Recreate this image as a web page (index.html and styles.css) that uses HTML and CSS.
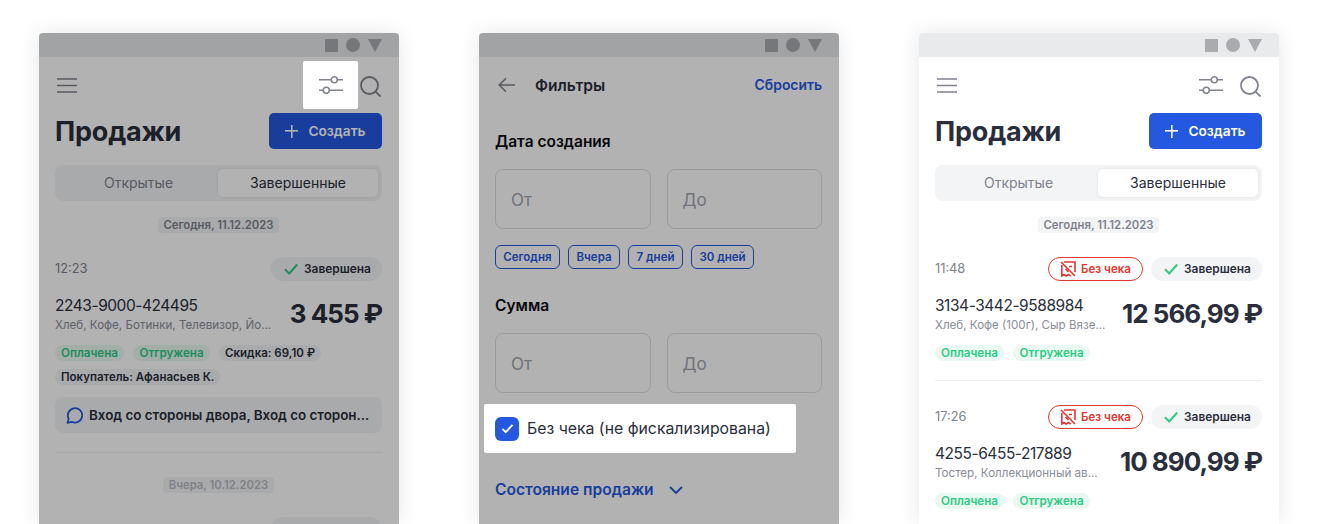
FILE: index.html
```html
<!DOCTYPE html>
<html lang="ru">
<head>
<meta charset="utf-8">
<title>Продажи</title>
<link rel="stylesheet" href="styles.css">
</head>
<body>
<svg class="defs" width="0" height="0" aria-hidden="true">
  <symbol id="i-menu" viewBox="0 0 20 15"><path d="M0 1h20M0 7.500h20M0 14h20" fill="none" stroke="currentColor" stroke-width="1.700"/></symbol>
  <symbol id="i-filter" viewBox="0 0 24 18"><g fill="none" stroke="currentColor" stroke-width="1.500"><path d="M0 3.800h12.300M18.300 3.800h5.700M0 14.200h4.300M10.300 14.200h13.700"/><circle cx="15.300" cy="3.800" r="3"/><circle cx="7.300" cy="14.200" r="3"/></g></symbol>
  <symbol id="i-search" viewBox="0 0 21 21"><g fill="none" stroke="currentColor" stroke-width="1.800"><circle cx="9.500" cy="9.500" r="8.500"/><path d="M15.800 15.800l4.700 4.700"/></g></symbol>
  <symbol id="i-check" viewBox="0 0 14 12"><path d="M1 6.300l4.200 4.200L13.200 1.500" fill="none" stroke="currentColor" stroke-width="2"/></symbol>
  <symbol id="i-nocheck" viewBox="0 0 16 16"><g fill="none" stroke="currentColor" stroke-width="1.600"><path d="M1 1l14 14M4 1h11v10M1.800 4v11l2.200-1.500 2.200 1.500 2.200-1.500 2.200 1.500M9 5.500h3M5.500 8l3 3"/></g></symbol>
  <symbol id="i-chat" viewBox="0 0 17 17"><path d="M1.500 15.800l1.200-4A7.200 7.200 0 1 1 5.800 14.800z" fill="none" stroke="currentColor" stroke-width="1.800" stroke-linejoin="round"/></symbol>
</svg>

<main class="board">
  <!-- 1 -->
  <section class="phone">
    <div class="statusbar"><i class="st st-sq"></i><i class="st st-ci"></i><i class="st st-tr"></i></div>
    <div class="screen">
      <header class="topbar">
        <svg class="ic-menu"><use href="#i-menu"/></svg>
        <span class="topicons"><span class="filterbox lifted"><svg class="ic-filter"><use href="#i-filter"/></svg></span><svg class="ic-search"><use href="#i-search"/></svg></span>
      </header>
      <div class="titlerow">
        <h1>Продажи</h1>
        <button class="create"><span class="plus"></span>Создать</button>
      </div>
      <div class="segment"><span>Открытые</span><span class="on">Завершенные</span></div>
      <div class="dateline"><span>Сегодня, 11.12.2023</span></div>
      <article class="order">
        <div class="orow"><time>12:23</time><span class="flags"><span class="done"><svg><use href="#i-check"/></svg>Завершена</span></span></div>
        <div class="main">
          <div class="info"><div class="num">2243-9000-424495</div><div class="sub">Хлеб, Кофе, Ботинки, Телевизор, Йо...</div></div>
          <div class="amount">3 455 ₽</div>
        </div>
        <div class="tags"><span class="tag g">Оплачена</span><span class="tag g">Отгружена</span><span class="tag d">Скидка: 69,10 ₽</span><span class="tag d">Покупатель: Афанасьев К.</span></div>
        <div class="note"><svg><use href="#i-chat"/></svg><span>Вход со стороны двора, Вход со сторон...</span></div>
      </article>
      <div class="dateline second"><span class="dim">Вчера, 10.12.2023</span></div>
      <div class="orow"><time></time><span class="flags"><span class="done"></span></span></div>
    </div>
    <div class="veil"></div>
  </section>

  <!-- 2 -->
  <section class="phone">
    <div class="statusbar"><i class="st st-sq"></i><i class="st st-ci"></i><i class="st st-tr"></i></div>
    <div class="screen">
      <header class="topbar filt">
        <svg class="ic-back" viewBox="0 0 18 16"><path d="M17 8H1.500M8 1.200L1.200 8 8 14.800" fill="none" stroke="currentColor" stroke-width="1.600"/></svg>
        <span class="ftitle">Фильтры</span>
        <span class="reset">Сбросить</span>
      </header>
      <h2 class="h-date">Дата создания</h2>
      <div class="fields"><span class="field">От</span><span class="field">До</span></div>
      <div class="chips"><span class="chip">Сегодня</span><span class="chip">Вчера</span><span class="chip">7 дней</span><span class="chip">30 дней</span></div>
      <h2 class="h-sum">Сумма</h2>
      <div class="fields"><span class="field">От</span><span class="field">До</span></div>
      <div class="checkwrap lifted">
        <span class="box"><svg viewBox="0 0 14 12"><path d="M1.500 6.500l3.500 3.500 7.500-8" fill="none" stroke="#fff" stroke-width="2"/></svg></span>
        <span>Без чека (не фискализирована)</span>
      </div>
      <div class="state">Состояние продажи <svg viewBox="0 0 14 9"><path d="M1 1l6 6 6-6" fill="none" stroke="currentColor" stroke-width="1.900"/></svg></div>
    </div>
    <div class="veil"></div>
  </section>

  <!-- 3 -->
  <section class="phone">
    <div class="statusbar"><i class="st st-sq"></i><i class="st st-ci"></i><i class="st st-tr"></i></div>
    <div class="screen">
      <header class="topbar">
        <svg class="ic-menu"><use href="#i-menu"/></svg>
        <span class="topicons"><span class="filterbox"><svg class="ic-filter"><use href="#i-filter"/></svg></span><svg class="ic-search"><use href="#i-search"/></svg></span>
      </header>
      <div class="titlerow">
        <h1>Продажи</h1>
        <button class="create"><span class="plus"></span>Создать</button>
      </div>
      <div class="segment"><span>Открытые</span><span class="on">Завершенные</span></div>
      <div class="dateline"><span>Сегодня, 11.12.2023</span></div>
      <article class="order ruled">
        <div class="orow"><time>11:48</time><span class="flags"><span class="nocheck"><svg><use href="#i-nocheck"/></svg>Без чека</span><span class="done"><svg><use href="#i-check"/></svg>Завершена</span></span></div>
        <div class="main">
          <div class="info"><div class="num">3134-3442-9588984</div><div class="sub">Хлеб, Кофе (100г), Сыр Вязе...</div></div>
          <div class="amount">12 566,99 ₽</div>
        </div>
        <div class="tags"><span class="tag g">Оплачена</span><span class="tag g">Отгружена</span></div>
      </article>
      <article class="order next">
        <div class="orow"><time>17:26</time><span class="flags"><span class="nocheck"><svg><use href="#i-nocheck"/></svg>Без чека</span><span class="done"><svg><use href="#i-check"/></svg>Завершена</span></span></div>
        <div class="main">
          <div class="info"><div class="num">4255-6455-217889</div><div class="sub">Тостер, Коллекционный ав...</div></div>
          <div class="amount">10 890,99 ₽</div>
        </div>
        <div class="tags"><span class="tag g">Оплачена</span><span class="tag g">Отгружена</span></div>
      </article>
    </div>
  </section>
</main>
</body>
</html>
```
FILE: styles.css
```css
* { box-sizing: border-box; }
html, body { margin: 0; height: 524px; overflow: hidden; background: #fff; }
body { font-family: Inter, "Noto Sans", sans-serif; color: #2a2e3c; }
.defs { position: absolute; }
.board { display: flex; gap: 80px; padding: 33px 0 0 39px; }
.phone { position: relative; width: 360px; height: 491px; flex: none; background: #fff; border-radius: 4px 4px 0 0; box-shadow: 0 0 20px rgba(30, 35, 50, .11); overflow: hidden; }
.statusbar { height: 24px; background: #e9eaec; display: flex; justify-content: flex-end; align-items: center; gap: 8px; padding-right: 17px; }
.st { display: block; }
.st-sq { width: 13px; height: 13px; background: #a9abaf; }
.st-ci { width: 14px; height: 14px; border-radius: 50%; background: #a9abaf; }
.st-tr { width: 0; height: 0; border-left: 7px solid transparent; border-right: 7px solid transparent; border-top: 13px solid #a9abaf; }
.screen { padding: 0 17px 0 16px; }
.topbar { height: 56px; display: flex; justify-content: space-between; align-items: center; color: #80838f; }
.ic-menu { width: 20px; height: 15px; margin-left: 2px; }
.topicons { display: flex; align-items: center; }
.filterbox { width: 55px; height: 48px; display: flex; align-items: center; justify-content: center; margin-right: 2px; border-radius: 2px; }
.ic-filter { width: 24px; height: 18px; }
.ic-search { width: 21px; height: 21px; margin: 2px 1px 0 0; }
.titlerow { display: flex; justify-content: space-between; align-items: center; height: 36px; }
h1 { margin: 0; font-size: 27px; font-weight: 700; letter-spacing: -.2px; color: #2a2e3c; }
.create { width: 113px; height: 36px; border: 0; border-radius: 5px; background: #2458e0; color: #fff; font: 600 13.700px Inter, sans-serif; display: flex; align-items: center; justify-content: center; gap: 10px; padding: 0; }
.plus { width: 13px; height: 13px; background: linear-gradient(#fff, #fff) center / 100% 1.600px no-repeat, linear-gradient(#fff, #fff) center / 1.600px 100% no-repeat; }
.segment { margin-top: 16px; height: 36px; background: #f3f4f5; border-radius: 8px; padding: 4px; display: grid; grid-template-columns: 159px 160px; font-size: 14px; color: #7f828e; text-align: center; line-height: 28px; }
.segment .on { background: #fff; color: #2a2e3c; border-radius: 5px; box-shadow: 0 0 3px rgba(30, 35, 50, .12); }
.dateline { margin-top: 16px; display: flex; justify-content: center; height: 16px; }
.dateline span { background: #f3f4f5; border-radius: 4px; padding: 0 6px; font-size: 11.300px; font-weight: 600; color: #7f828e; line-height: 16px; }
.order { padding-top: 24px; }
.orow { display: flex; justify-content: space-between; align-items: center; height: 24px; }
time { font-size: 12.800px; color: #7f828e; padding-bottom: 2px; }
.flags { display: flex; gap: 8px; }
.done, .nocheck { height: 24px; border-radius: 12px; display: flex; align-items: center; font-size: 12px; font-weight: 600; padding-bottom: 1px; }
.done { width: 111px; background: #f2f4f5; color: #2a2e3c; padding-left: 13px; gap: 6px; font-size: 11.900px; }
.done svg { width: 14px; height: 12px; color: #2ccb85; margin-top: 1px; }
.nocheck { width: 95px; border: 1px solid #e5352f; color: #e5352f; justify-content: center; gap: 5px; background: #fff; font-size: 11.500px; }
.nocheck svg { width: 16px; height: 16px; margin-top: 1px; }
.main { display: flex; justify-content: space-between; align-items: center; margin-top: 12px; height: 40px; }
.info { min-width: 0; }
.num { font-size: 15.500px; line-height: 22px; letter-spacing: -.45px; }
.sub { font-size: 11.600px; line-height: 14px; color: #8a8d98; margin-top: 1px; }
.amount { font-size: 26px; font-weight: 700; white-space: nowrap; letter-spacing: -1px; }
.tags { display: flex; flex-wrap: wrap; gap: 8px 9.500px; margin-top: 12px; }
.tag { height: 16px; line-height: 16px; border-radius: 8px; padding: 0 6px; font-size: 11.600px; font-weight: 600; }
.tag.g { background: #e9f9f1; color: #2ccb85; }
.tag.d { background: #f2f4f5; color: #2a2e3c; font-size: 11.500px; }
.note { margin-top: 12px; height: 36px; border-radius: 8px; background: #f2f4f5; display: flex; align-items: center; gap: 6px; padding-left: 11px; font-size: 13.400px; font-weight: 600; white-space: nowrap; }
.note svg { width: 17px; height: 17px; color: #2458e0; flex: none; }
.order { border-bottom: 1px solid #eceef0; padding-bottom: 19px; }
.order.next { border-bottom: 0; }
.dateline.second { margin-top: 24px; margin-bottom: 24px; }
.dateline .dim { color: #b8bac0; }
.veil { position: absolute; inset: 0; background: rgba(0, 0, 0, .3); z-index: 1; }
.lifted { position: relative; z-index: 2; background: #fff; }

.filt { justify-content: flex-start; }
.ic-back { width: 18px; height: 16px; margin-left: 3px; color: #80838f; }
.ftitle { margin-left: 19px; font-size: 15.600px; font-weight: 600; color: #2a2e3c; }
.reset { margin-left: auto; font-size: 13.900px; font-weight: 600; color: #2458e0; }
h2 { margin: 0; height: 24px; font-size: 15.500px; font-weight: 600; color: #0b0c10; line-height: 26px; }
.h-date { margin-top: 16px; }
.h-sum { margin-top: 24px; }
.fields { margin-top: 16px; display: grid; grid-template-columns: 1fr 1fr; gap: 16px; }
.field { height: 60px; border: 1px solid #dcdee2; border-radius: 8px; padding-left: 15px; line-height: 60px; font-size: 17px; color: #a3a5ad; }
.chips { display: flex; gap: 8.600px; margin-top: 16px; }
.chip { height: 24px; border: 1px solid #2458e0; border-radius: 6px; padding: 0 7.200px; font-size: 11.500px; font-weight: 600; line-height: 22px; color: #2458e0; }
.checkwrap { width: 312px; height: 49px; margin: 11px 0 0 -11px; padding-left: 11px; display: flex; align-items: center; gap: 8px; border-radius: 2px; font-size: 15.800px; color: #2a2e3c; }
.box { width: 24px; height: 24px; background: #2458e0; border-radius: 6px; display: flex; align-items: center; justify-content: center; }
.box svg { width: 13px; height: 11px; }
.state { margin-top: 25px; font-size: 15.600px; font-weight: 600; color: #2458e0; display: flex; align-items: center; gap: 6px; line-height: 24px; }
.state svg { width: 14px; height: 9px; margin-left: 9px; }
```
